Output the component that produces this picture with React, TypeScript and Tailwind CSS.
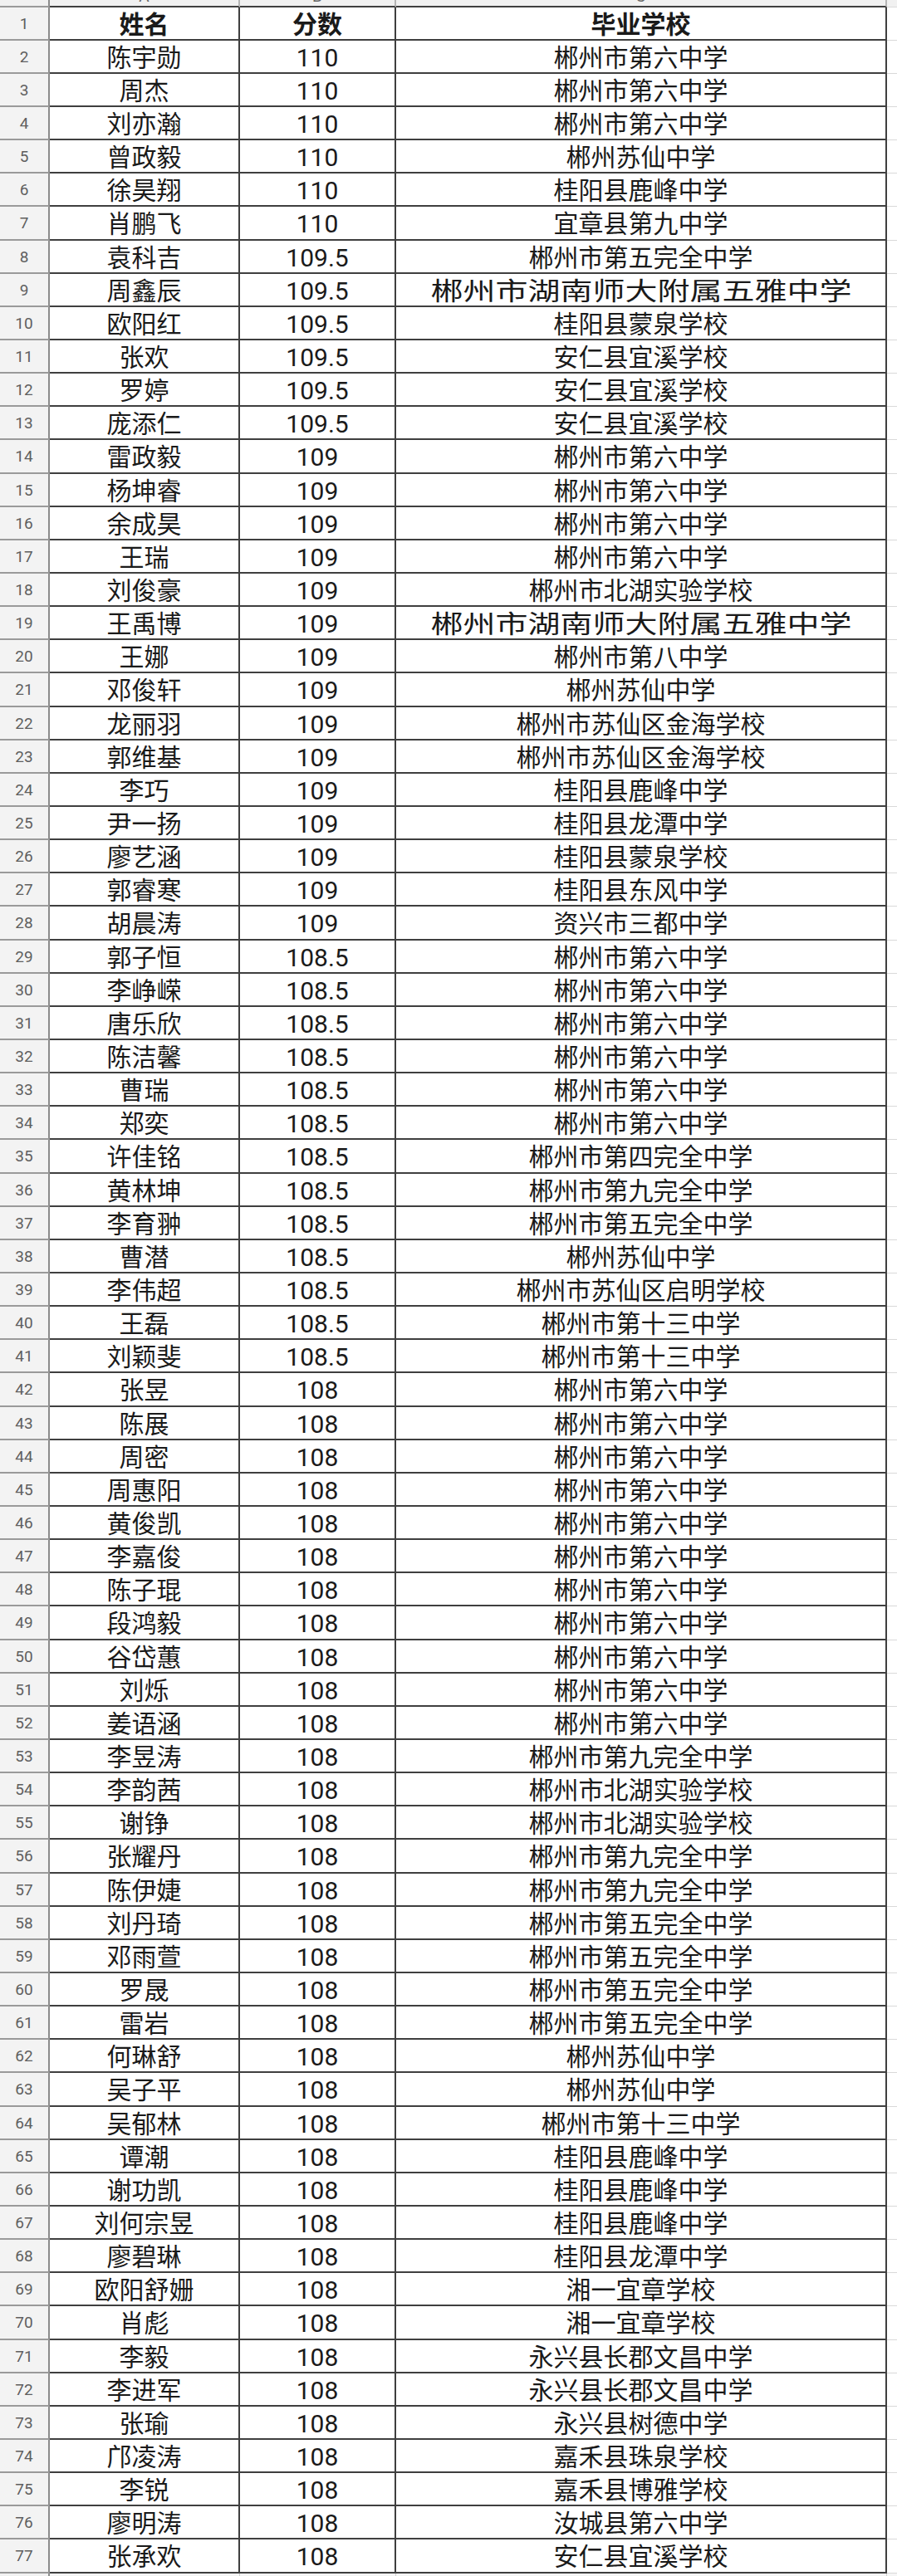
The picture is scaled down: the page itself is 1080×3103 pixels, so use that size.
import React from 'react';

type Row = [string, string, string];

const rows: Row[] = [
  ['陈宇勋', '110', '郴州市第六中学'],
  ['周杰', '110', '郴州市第六中学'],
  ['刘亦瀚', '110', '郴州市第六中学'],
  ['曾政毅', '110', '郴州苏仙中学'],
  ['徐昊翔', '110', '桂阳县鹿峰中学'],
  ['肖鹏飞', '110', '宜章县第九中学'],
  ['袁科吉', '109.5', '郴州市第五完全中学'],
  ['周鑫辰', '109.5', '郴州市湖南师大附属五雅中学'],
  ['欧阳红', '109.5', '桂阳县蒙泉学校'],
  ['张欢', '109.5', '安仁县宜溪学校'],
  ['罗婷', '109.5', '安仁县宜溪学校'],
  ['庞添仁', '109.5', '安仁县宜溪学校'],
  ['雷政毅', '109', '郴州市第六中学'],
  ['杨坤睿', '109', '郴州市第六中学'],
  ['余成昊', '109', '郴州市第六中学'],
  ['王瑞', '109', '郴州市第六中学'],
  ['刘俊豪', '109', '郴州市北湖实验学校'],
  ['王禹博', '109', '郴州市湖南师大附属五雅中学'],
  ['王娜', '109', '郴州市第八中学'],
  ['邓俊轩', '109', '郴州苏仙中学'],
  ['龙丽羽', '109', '郴州市苏仙区金海学校'],
  ['郭维基', '109', '郴州市苏仙区金海学校'],
  ['李巧', '109', '桂阳县鹿峰中学'],
  ['尹一扬', '109', '桂阳县龙潭中学'],
  ['廖艺涵', '109', '桂阳县蒙泉学校'],
  ['郭睿寒', '109', '桂阳县东风中学'],
  ['胡晨涛', '109', '资兴市三都中学'],
  ['郭子恒', '108.5', '郴州市第六中学'],
  ['李峥嵘', '108.5', '郴州市第六中学'],
  ['唐乐欣', '108.5', '郴州市第六中学'],
  ['陈洁馨', '108.5', '郴州市第六中学'],
  ['曹瑞', '108.5', '郴州市第六中学'],
  ['郑奕', '108.5', '郴州市第六中学'],
  ['许佳铭', '108.5', '郴州市第四完全中学'],
  ['黄林坤', '108.5', '郴州市第九完全中学'],
  ['李育翀', '108.5', '郴州市第五完全中学'],
  ['曹潜', '108.5', '郴州苏仙中学'],
  ['李伟超', '108.5', '郴州市苏仙区启明学校'],
  ['王磊', '108.5', '郴州市第十三中学'],
  ['刘颖斐', '108.5', '郴州市第十三中学'],
  ['张昱', '108', '郴州市第六中学'],
  ['陈展', '108', '郴州市第六中学'],
  ['周密', '108', '郴州市第六中学'],
  ['周惠阳', '108', '郴州市第六中学'],
  ['黄俊凯', '108', '郴州市第六中学'],
  ['李嘉俊', '108', '郴州市第六中学'],
  ['陈子琨', '108', '郴州市第六中学'],
  ['段鸿毅', '108', '郴州市第六中学'],
  ['谷岱蕙', '108', '郴州市第六中学'],
  ['刘烁', '108', '郴州市第六中学'],
  ['姜语涵', '108', '郴州市第六中学'],
  ['李昱涛', '108', '郴州市第九完全中学'],
  ['李韵茜', '108', '郴州市北湖实验学校'],
  ['谢铮', '108', '郴州市北湖实验学校'],
  ['张耀丹', '108', '郴州市第九完全中学'],
  ['陈伊婕', '108', '郴州市第九完全中学'],
  ['刘丹琦', '108', '郴州市第五完全中学'],
  ['邓雨萱', '108', '郴州市第五完全中学'],
  ['罗晟', '108', '郴州市第五完全中学'],
  ['雷岩', '108', '郴州市第五完全中学'],
  ['何琳舒', '108', '郴州苏仙中学'],
  ['吴子平', '108', '郴州苏仙中学'],
  ['吴郁林', '108', '郴州市第十三中学'],
  ['谭潮', '108', '桂阳县鹿峰中学'],
  ['谢功凯', '108', '桂阳县鹿峰中学'],
  ['刘何宗昱', '108', '桂阳县鹿峰中学'],
  ['廖碧琳', '108', '桂阳县龙潭中学'],
  ['欧阳舒姗', '108', '湘一宜章学校'],
  ['肖彪', '108', '湘一宜章学校'],
  ['李毅', '108', '永兴县长郡文昌中学'],
  ['李进军', '108', '永兴县长郡文昌中学'],
  ['张瑜', '108', '永兴县树德中学'],
  ['邝凌涛', '108', '嘉禾县珠泉学校'],
  ['李锐', '108', '嘉禾县博雅学校'],
  ['廖明涛', '108', '汝城县第六中学'],
  ['张承欢', '108', '安仁县宜溪学校'],
];

const grid = 'grid grid-cols-[60px_229px_188px_591px_1fr]';
const dataCell =
  'flex items-center justify-center pt-[3px] border-r-2 border-b-2 border-[#3f3f3f] text-[30px] leading-none text-[#1a1a1a] whitespace-nowrap';

function SheetRow({ n, cells, bold, tall }: { n: number; cells: Row; bold?: boolean; tall?: boolean }) {
  return (
    <div className={`${grid} ${tall ? 'h-[41px]' : 'h-[40px]'}`}>
      <div className="flex items-center justify-center pt-[2px] bg-[#f3f3f3] border-r-2 border-r-[#8c8c8c] border-b-2 border-b-[#9a9a9a] text-[19px] text-[#5f5f5f]">
        {n}
      </div>
      {cells.map((c, i) => (
        <div key={i} className={`${dataCell} ${bold ? 'font-bold' : 'font-normal'}`}>
          {/* long names are stretched to fill the cell in the sheet */}
          <span className={c.length >= 13 ? 'inline-block scale-x-[1.3]' : ''}>{c}</span>
        </div>
      ))}
      <div className="border-b border-[#d9d9d9]" />
    </div>
  );
}

export default function App() {
  return (
    <div className="w-[1080px] bg-white font-['Roboto','Noto_Sans_CJK_SC',sans-serif]">
      {/* column letter strip, mostly scrolled out of view */}
      <div className={`${grid} h-[9px] overflow-hidden bg-[#f1f1f1]`}>
        <div className="border-r-2 border-r-[#8c8c8c] border-b-2 border-b-[#9a9a9a]" />
        {['A', 'B', 'C'].map((l) => (
          <div
            key={l}
            className="flex justify-center border-r-2 border-r-[#b5b5b5] border-b-2 border-b-[#3f3f3f] text-[19px] leading-none text-[#666] -mt-[12px]"
          >
            <span className="mt-[-2px]">{l}</span>
          </div>
        ))}
        <div className="border-b border-[#d9d9d9]" />
      </div>

      <SheetRow n={1} cells={['姓名', '分数', '毕业学校']} bold />
      {rows.map((r, i) => (
        <SheetRow key={i} n={i + 2} cells={r} tall={(i + 2) % 7 === 0} />
      ))}

      <div className={`${grid} h-[20px] bg-[#f6f6f6]`}>
        <div className="bg-[#f3f3f3] border-r-2 border-r-[#8c8c8c]" />
        <div className="border-r border-[#d0d0d0]" />
        <div className="border-r border-[#d0d0d0]" />
        <div className="border-r border-[#d0d0d0]" />
        <div />
      </div>
    </div>
  );
}
